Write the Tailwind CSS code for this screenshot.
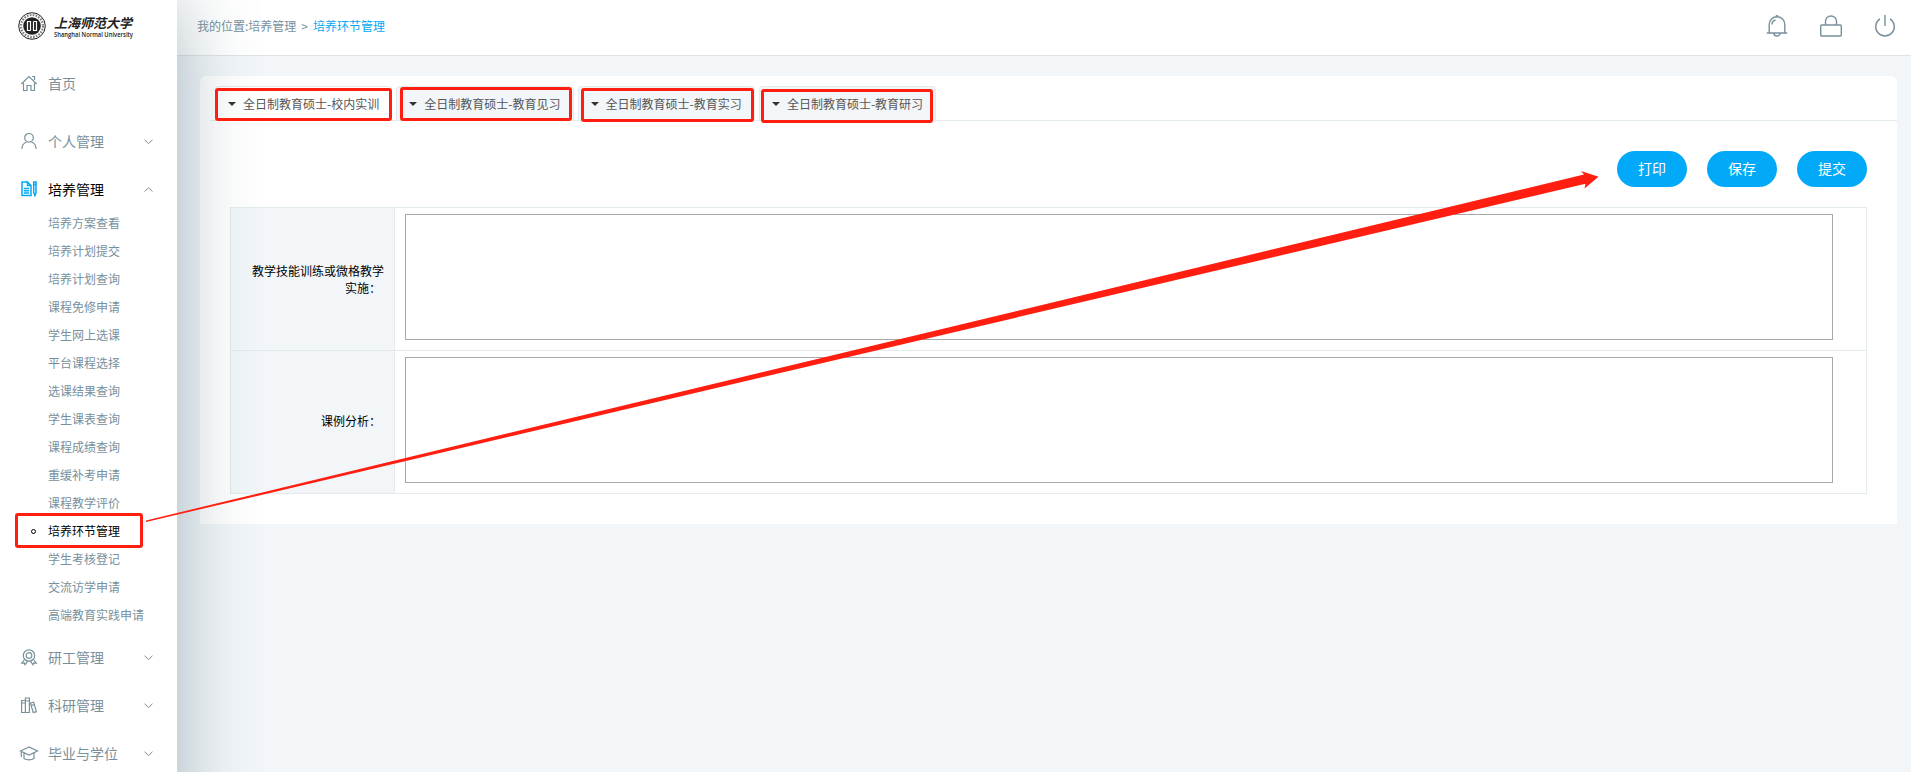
<!DOCTYPE html>
<html lang="zh-CN">

<head>
    <meta charset="UTF-8">
    <meta name="viewport" content="width=device-width, initial-scale=1.0">
    <title>培养环节管理</title>
    <script src="https://cdn.jsdelivr.net/npm/@tailwindcss/browser@4"></script>
</head>

<body class="relative flex w-[1911px] h-[772px] overflow-hidden bg-[#f2f6f9] text-xs text-[#78909c] font-['Noto_Sans_CJK_SC',sans-serif]">

    <!-- Sidebar -->
    <aside class="relative z-10 w-[177px] h-[900px] shrink-0 bg-white shadow-[0_0_80px_rgba(69,101,115,0.45)]">
        <div class="flex items-center h-[60px] pl-[18px] pb-[8px] text-[#222]">
            <svg class="w-7 h-7 shrink-0" viewBox="0 0 28 28" fill="none" stroke="currentColor">
                <circle cx="14" cy="14" r="13.3" stroke-width="1" />
                <circle cx="14" cy="14" r="11" stroke-width="2.2" stroke-dasharray="1.6 1.3" opacity=".6" />
                <circle cx="14" cy="14" r="8.8" fill="currentColor" stroke="none" />
                <path d="M12.500 18.500h-3V9.500h3v9M15.500 9.500h3v9h-3v-9" stroke="#fff" stroke-width="1.2" />
            </svg>
            <div class="ml-2 w-[82px]">
                <svg class="block w-[82px] h-[20px] overflow-visible" viewBox="0 0 82 20">
                    <text x="0" y="15.500" textLength="78" lengthAdjust="spacing" font-size="13" font-weight="600" font-style="italic" fill="currentColor">上海师范大学</text>
                </svg>
                <svg class="block w-[82px] h-[10px] -mt-[2px] overflow-visible" viewBox="0 0 82 10">
                    <text x="0" y="6.500" textLength="79" lengthAdjust="spacingAndGlyphs" font-family="Open Sans" font-size="6.800" font-weight="600" fill="currentColor">Shanghai Normal University</text>
                </svg>
            </div>
        </div>

        <nav id="menu" class="-mt-px"></nav>
    </aside>

    <!-- Page -->
    <div class="flex flex-col flex-1 min-w-0">
        <header class="flex items-center justify-between h-14 shrink-0 pl-5 pr-[15px] pb-[4px] bg-white border-b border-[#dfe4e7]">
            <div>我的位置:培养管理<span class="mx-[5px]">&gt;</span><span class="text-[#03a9f4]">培养环节管理</span></div>
            <div class="flex items-center gap-8">
                <svg class="w-[22px] h-[22px] overflow-visible" viewBox="0 0 22 22" fill="none" stroke="currentColor" stroke-width="1.4">
                    <path d="M.8 18h20.400M3.200 18V9.500a7.800 7.800 0 0 1 15.600 0V18M8 18.500a3 2.500 0 0 0 6 0M6 9.500c0-2.500 1.500-4 3.500-4.500M10 1.200a1.200 1.200 0 0 1 2 0" />
                </svg>
                <svg class="w-[22px] h-[22px]" viewBox="0 0 22 22" fill="none" stroke="currentColor" stroke-width="1.4">
                    <rect x=".7" y="10" width="20.600" height="11" rx="1" />
                    <path d="M5.500 10V6.500a5.500 5.500 0 0 1 11 0V10" />
                </svg>
                <svg class="w-[22px] h-[22px] overflow-visible" viewBox="0 0 22 22" fill="none" stroke="currentColor" stroke-width="1.4">
                    <path d="M11 0v11M6 3.800a9.300 9.300 0 1 0 10 0" />
                </svg>
            </div>
        </header>

        <main class="mt-5 ml-[23px] mr-[14px] h-[448px] bg-white rounded-t-md">
            <!-- Tabs -->
            <div class="flex items-end gap-1 ml-[10px] pl-[5px] h-[45px] border-b border-[#e3ebec] text-[#555]">
                <div class="flex items-center w-[177.300px] h-[35px] -mb-px pl-3 pb-px rounded-t border border-b-0 border-[#e3ebec] bg-white">
                    <svg class="w-2 h-1 mr-[7px]" viewBox="0 0 8 4"><path d="M0 0h8L4 4z" fill="#333" /></svg>全日制教育硕士-校内实训
                </div>
                <div class="flex items-center w-[177.300px] h-[34px] pl-3 rounded-t border border-b-0 border-[#e3ebec] bg-[#f2f6f9]">
                    <svg class="w-2 h-1 mr-[7px]" viewBox="0 0 8 4"><path d="M0 0h8L4 4z" fill="#333" /></svg>全日制教育硕士-教育见习
                </div>
                <div class="flex items-center w-[177.300px] h-[34px] pl-3 rounded-t border border-b-0 border-[#e3ebec] bg-[#f2f6f9]">
                    <svg class="w-2 h-1 mr-[7px]" viewBox="0 0 8 4"><path d="M0 0h8L4 4z" fill="#333" /></svg>全日制教育硕士-教育实习
                </div>
                <div class="flex items-center w-[177.300px] h-[34px] pl-3 rounded-t border border-b-0 border-[#e3ebec] bg-[#f2f6f9]">
                    <svg class="w-2 h-1 mr-[7px]" viewBox="0 0 8 4"><path d="M0 0h8L4 4z" fill="#333" /></svg>全日制教育硕士-教育研习
                </div>
            </div>

            <div class="flex justify-end gap-5 mt-[30px] mr-[30px] text-sm text-white">
                <button class="w-[70px] h-9 pb-[2px] rounded-full bg-[#03a9f9]">打印</button>
                <button class="w-[70px] h-9 pb-[2px] rounded-full bg-[#03a9f9]">保存</button>
                <button class="w-[70px] h-9 pb-[2px] rounded-full bg-[#03a9f9]">提交</button>
            </div>

            <!-- Form -->
            <div class="mt-5 ml-[30px] mr-[30px] border border-[#e3ebec] text-black">
                <div class="flex h-[143px] border-b border-[#e3ebec]">
                    <div class="flex items-center justify-end w-[164px] shrink-0 pr-[10px] pb-[1px] border-r border-[#e3ebec] bg-[#f2f6f9] text-right leading-[17px]">
                        <p>教学技能训练或微格教学<br><span class="pr-[3px]">实施：</span></p>
                    </div>
                    <textarea class="w-[1428px] h-[126px] mt-[6px] ml-[10px] border border-[#a9a9a9] bg-white resize-none"></textarea>
                </div>
                <div class="flex h-[142px]">
                    <div class="flex items-center justify-end w-[164px] shrink-0 pr-[13px] pb-[3px] border-r border-[#e3ebec] bg-[#f2f6f9] text-right leading-[17px]">
                        <p>课例分析：</p>
                    </div>
                    <textarea class="w-[1428px] h-[126px] mt-[6px] ml-[10px] border border-[#a9a9a9] bg-white resize-none"></textarea>
                </div>
            </div>
        </main>
    </div>

    <!-- Marks drawn over the page -->
    <svg class="absolute inset-0 z-20 w-[1911px] h-[772px] pointer-events-none" viewBox="0 0 1911 772" fill="none" stroke="#ff1e10" stroke-width="3">
        <rect x="216.500" y="89.500" width="174" height="30" rx="1.500" />
        <rect x="401.500" y="88.500" width="169" height="31" rx="1.500" />
        <rect x="582.500" y="89.500" width="170" height="31" rx="1.500" />
        <rect x="762.500" y="90.500" width="169" height="31" rx="1.500" />
        <rect x="16.500" y="514.500" width="125" height="32" rx="1.500" />
        <path d="M146 520.400L1584 174.500L1581 171L1598.500 176.700L1584.500 188.500L1585.500 183.800L146 522z" fill="#ff1e10" stroke="none" />
    </svg>

</body>

<script>
    const icons = {
        home: '<path d="M.3 9L8 1.500l7.700 7.500M2.500 8v7.500h3.500v-5h4v5h3.500V8M11 1.500h2.500V5" />',
        user: '<circle cx="8" cy="4.800" r="4.300" /><path d="M.8 16c.2-3.500 2-6 4.700-7M15.200 16c-.2-3.500-2-6-4.700-7" />',
        doc: '<path stroke-width="1.500" d="M6.500 1H1v13.500h9V4.500L6.500 1v3.500H10M3 7.500h5M3 9.800h5M3 12h5M12.700 1h2.300v10.500l-1.100 3-1.200-3zM12.500 3.500H15" />',
        medal: '<circle cx="8" cy="6.500" r="5.700" /><circle cx="8" cy="6.500" r="2.800" /><path d="M3.500 10.500L.8 14l2.500-.2.700 2 2.500-3.500M12.500 10.500l2.700 3.500-2.500-.2-.7 2-2.500-3.500" />',
        books: '<path d="M.6 3.500h3.800v12H.6zM4.400 1h4v14.500h-4zM9.400 6l3.200-.8 2.800 9.500-3.200.8zM.6 6h3.800M4.400 4h4M10 8.500l3.200-.8" />',
        cap: '<path d="M8 2L-.5 6 8 10l8.500-4zM3 8v5.500c2.500 1.700 7.500 1.700 10 0V8M.3 7V12" />'
    }

    const items = [
        { name: '首页', icon: 'home' },
        { name: '个人管理', icon: 'user', arrow: 'down' },
        {
            name: '培养管理', icon: 'doc', arrow: 'up',
            children: ['培养方案查看', '培养计划提交', '培养计划查询', '课程免修申请', '学生网上选课', '平台课程选择', '选课结果查询', '学生课表查询', '课程成绩查询', '重缓补考申请', '课程教学评价', '培养环节管理', '学生考核登记', '交流访学申请', '高端教育实践申请']
        },
        { name: '研工管理', icon: 'medal', arrow: 'down' },
        { name: '科研管理', icon: 'books', arrow: 'down' },
        { name: '毕业与学位', icon: 'cap', arrow: 'down' }
    ]

    const menu = document.getElementById('menu')
    let html = ''

    items.forEach(item => {
        const open = !!item.children
        const points = item.arrow === 'up' ? '0.500,4.500 4.500,0.800 8.500,4.500' : '0.500,0.800 4.500,4.500 8.500,0.800'

        html += `<div class="flex items-center h-12 pl-[21px] pr-6 text-sm ${open ? 'text-black' : ''} ${item.icon === 'home' ? 'mb-[10px]' : ''}">
            <svg class="w-4 h-4 mr-[11px] overflow-visible ${open ? 'text-[#03a9f4]' : ''}" viewBox="0 0 16 16" fill="none" stroke="currentColor" stroke-width="1.2">${icons[item.icon]}</svg>
            <span class="flex-1">${item.name}</span>
            ${item.arrow ? `<svg class="w-[9px] h-[5px]" viewBox="0 0 9 5" fill="none" stroke="#888"><polyline points="${points}" /></svg>` : ''}
        </div>`

        if (open) {
            html += '<ul class="-mt-1 mb-1">'
            item.children.forEach(child => {
                const active = child === '培养环节管理'
                html += `<li class="flex items-center h-7 ${active ? 'pl-[31px] text-black' : 'pl-12'}">
                    ${active ? '<span class="w-[5px] h-[5px] mr-3 rounded-full border border-black"></span>' : ''}${child}
                </li>`
            })
            html += '</ul>'
        }
    })

    menu.innerHTML = html
</script>

</html>
